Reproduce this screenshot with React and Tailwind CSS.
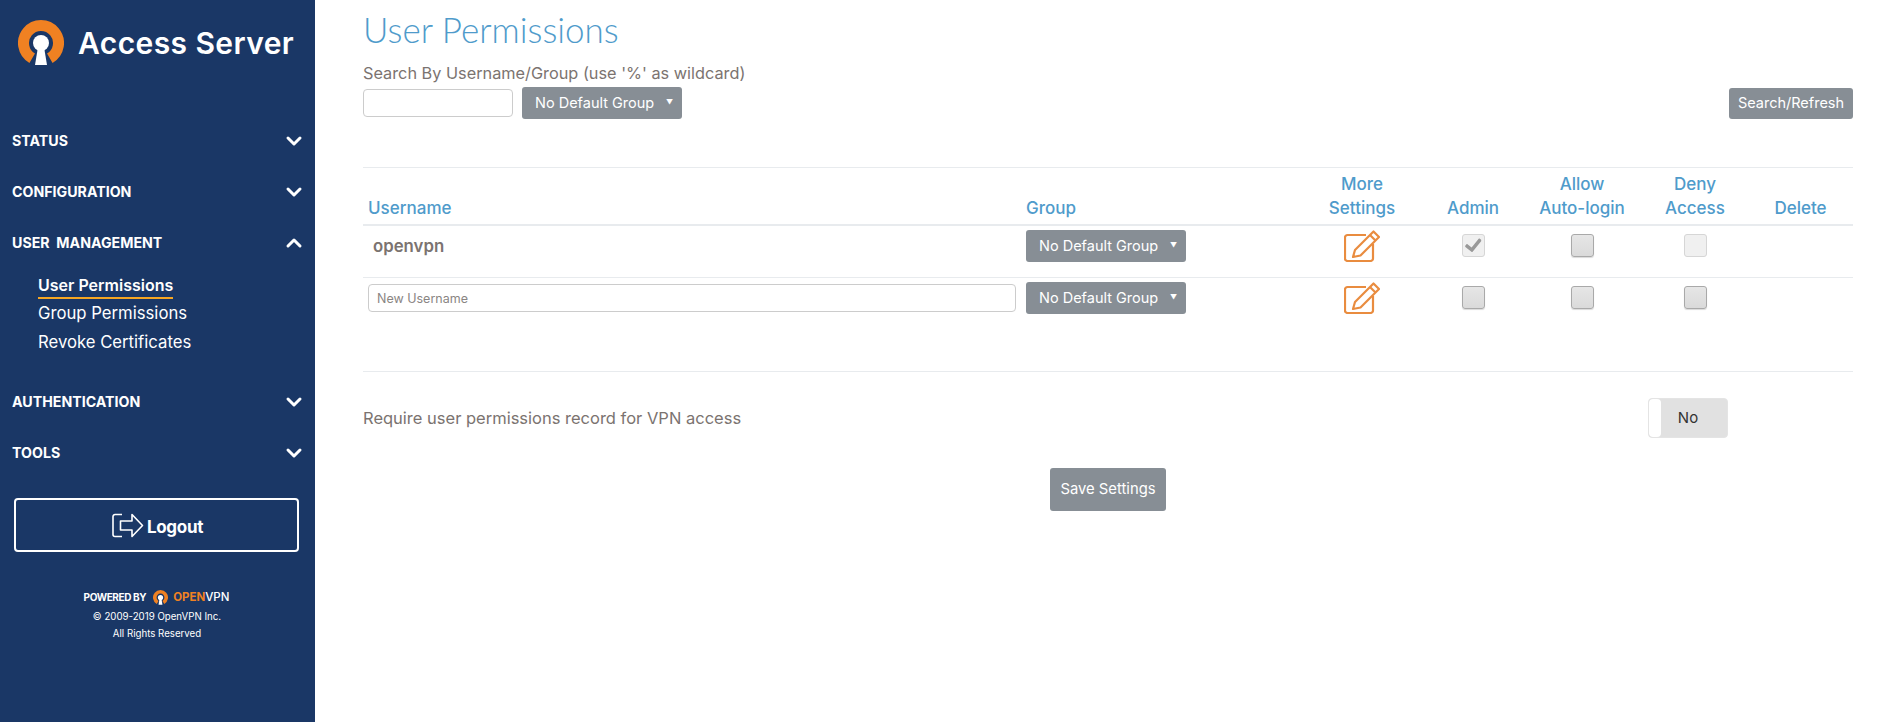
import React from "react";
import { ChevronDown, ChevronUp } from "lucide-react";
import { FaCheck } from "react-icons/fa";

const Logo = ({ className }) => (
  <svg viewBox="0 0 46 46" className={className}>
    <path d="M14.2 38.2A17.5 17.5 0 1 1 31.8 38.2" fill="none" stroke="#f08122" strokeWidth="11" />
    <circle cx="23" cy="23" r="8" fill="#fff" />
    <path d="M20 27h6l3 18H17z" fill="#fff" />
  </svg>
);

const NavItem = ({ label, open }) => (
  <div className="flex h-[51px] items-center justify-between pl-3 pr-[9px] text-[14.2px] font-bold text-white">
    <span className="whitespace-pre">{label}</span>
    {open ? <ChevronUp size={24} strokeWidth={3} /> : <ChevronDown size={24} strokeWidth={3} />}
  </div>
);

const Sidebar = () => (
  <aside className="flex min-h-[722px] w-[315px] shrink-0 flex-col bg-[#1a3766] text-white">
    <div className="flex h-[115px] items-start pl-[18px] pt-5">
      <Logo className="h-[46px] w-[46px]" />
      <span className="ml-[14px] mt-[2px] text-[30px] font-semibold leading-[42px] tracking-[0.4px]">Access Server</span>
    </div>
    <NavItem label="STATUS" />
    <NavItem label="CONFIGURATION" />
    <NavItem label="USER  MANAGEMENT" open />
    <div className="flex flex-col items-start pl-[38px] pb-5 pt-1 text-[16.7px]">
      <a className="flex h-[27px] items-center border-b-2 border-[#f6a623] text-[16px] font-semibold leading-[24px]">User Permissions</a>
      <a className="flex h-[27px] items-center pt-[2px]">Group Permissions</a>
      <a className="flex h-[30px] items-center pt-[4px]">Revoke Certificates</a>
    </div>
    <NavItem label="AUTHENTICATION" />
    <NavItem label="TOOLS" />
    <button className="mx-[14px] mt-[20px] flex h-[54px] w-[285px] items-center justify-center rounded border-2 border-white text-[17px] font-bold">
      <svg viewBox="0 0 32 25" className="ml-[2px] mr-[3px] h-[25px] w-[32px]" fill="none" stroke="#fff" strokeWidth="1.6">
        <path d="M10 1.5H3a2 2 0 0 0-2 2V21.5a2 2 0 0 0 2 2h7" />
        <path d="M8.5 8H20V1.5L30.5 12.5 20 23.5V17H8.5Z" strokeLinejoin="round" />
      </svg>
      <span className="mt-[5px] tracking-[-0.3px]">Logout</span>
    </button>
    <div className="mt-[37px] flex items-center justify-center pr-[2px] text-[10px] font-bold">
      <span className="tracking-[-0.4px]">POWERED BY</span>
      <Logo className="ml-[7px] h-[15px] w-[15px]" />
      <span className="ml-[5px] text-[11.5px] text-[#f08122]">OPEN</span>
      <span className="text-[11.5px] font-medium">VPN</span>
    </div>
    <div className="mt-[2px] pr-[1px] text-center text-[9.7px] leading-[17px]">
      <div>© 2009-2019 OpenVPN Inc.</div>
      <div>All Rights Reserved</div>
    </div>
  </aside>
);

const GroupSelect = () => (
  <button className="flex h-8 w-[160px] items-center justify-between rounded-[3px] bg-[#878e95] pl-[13px] pr-[9px] text-[14.5px] text-white">
    <span>No Default Group</span>
    <span className="text-[7px]">▼</span>
  </button>
);

const Check = ({ checked, disabled }) => (
  <span
    className={`flex h-[23px] w-[23px] items-center justify-center rounded-[3px] border ${
      disabled
        ? "border-[#d6d6d6] bg-[#f0f0f0]"
        : "border-[#a9a9a9] bg-[linear-gradient(#e6e6e6,#dadada)] shadow-[0_1px_1px_rgba(0,0,0,0.15)]"
    }`}
  >
    {checked && <FaCheck size={17} color="#999" className="-rotate-6" />}
  </span>
);

const EditIcon = () => (
  <svg viewBox="0 0 36 32" className="h-8 w-9" fill="none" stroke="#e98c3f" strokeWidth="2.2" strokeLinejoin="round">
    <path d="M22 5H3.5A2.5 2.5 0 0 0 1 7.5V28.5A2.5 2.5 0 0 0 3.5 31H26.5A2.5 2.5 0 0 0 29 28.5V14" />
    <path d="M9 27L11 20 29.5 1.5 35 7 16.5 25.5Z" />
    <path d="M26 5L31.5 10.5" />
  </svg>
);

const gridCols = "grid grid-cols-[658px_279px_124px_98px_120px_106px_105px]";

const HeaderCell = ({ children }) => (
  <div className="text-center leading-6">{children}</div>
);

const UserTable = () => (
  <div>
    <div className={`${gridCols} h-[58px] items-end border-b-2 border-[#e8ebee] pb-1 text-[17px] font-medium text-[#4f9bcb]`}>
      <div className="pl-[5px] leading-6">Username</div>
      <div className="pl-[5px] leading-6">Group</div>
      <HeaderCell>More<br />Settings</HeaderCell>
      <HeaderCell>Admin</HeaderCell>
      <HeaderCell>Allow<br />Auto-login</HeaderCell>
      <HeaderCell>Deny<br />Access</HeaderCell>
      <HeaderCell>Delete</HeaderCell>
    </div>
    <div className={`${gridCols} h-[52px] items-start border-b border-[#e8ebee] pt-1`}>
      <div className="pl-[10px] text-[16.8px] font-semibold leading-8 text-[#7b7370]">openvpn</div>
      <div className="pl-[5px]"><GroupSelect /></div>
      <div className="flex justify-center"><EditIcon /></div>
      <div className="flex justify-center pt-1"><Check checked disabled /></div>
      <div className="flex justify-center pt-1"><Check /></div>
      <div className="flex justify-center pt-1"><Check disabled /></div>
      <div />
    </div>
    <div className={`${gridCols} h-[41px] items-start pt-1`}>
      <div className="pl-[5px] pt-[2px]">
        <input
          placeholder="New Username"
          className="h-[28px] w-[648px] rounded-[4px] border border-[#ccc] pl-2 text-[12.5px] placeholder:text-[#8a8583] outline-none"
        />
      </div>
      <div className="pl-[5px]"><GroupSelect /></div>
      <div className="flex justify-center"><EditIcon /></div>
      <div className="flex justify-center pt-1"><Check /></div>
      <div className="flex justify-center pt-1"><Check /></div>
      <div className="flex justify-center pt-1"><Check /></div>
      <div />
    </div>
  </div>
);

export default function App() {
  return (
    <div className="flex min-h-[722px] bg-white [font-family:Inter,sans-serif]">
      <Sidebar />
      <main className="ml-[48px] w-[1490px]">
        <h1 className="h-[61px] pt-[6px] text-[35px] font-light leading-[46px] text-[#4f9bcb] [font-family:Lato,sans-serif]">
          User Permissions
        </h1>
        <div className="text-[16.3px] leading-[24px] text-[#7b7370]">Search By Username/Group (use '%' as wildcard)</div>
        <div className="mt-[2px] flex items-center justify-between">
          <div className="flex items-center gap-[9px]">
            <input className="h-7 w-[150px] rounded-[4px] border border-[#ccc] outline-none" />
            <GroupSelect />
          </div>
          <button className="h-[31px] w-[124px] rounded-[3px] bg-[#878e95] text-[14.5px] text-white">Search/Refresh</button>
        </div>
        <div className="mt-[48px] border-t border-[#e8ebee]" />
        <UserTable />
        <div className="mt-[52px] border-t border-[#e8ebee]" />
        <div className="mt-[26px] flex h-10 items-center justify-between text-[16.5px] text-[#7b7370]">
          <span>Require user permissions record for VPN access</span>
          <div className="mr-[125px] flex h-10 w-[80px] overflow-hidden rounded-[4px] border border-[#e4e4e4] bg-[#e1e1e1]">
            <span className="w-[12px] rounded-[4px] bg-white" />
            <span className="flex-1 pr-[12px] text-center text-[15px] leading-[38px] text-[#333]">No</span>
          </div>
        </div>
        <div className="mt-[30px] flex justify-center">
          <button className="h-[43px] w-[116px] rounded-[3px] bg-[#878e95] text-[14.8px] text-white">Save Settings</button>
        </div>
      </main>
    </div>
  );
}
